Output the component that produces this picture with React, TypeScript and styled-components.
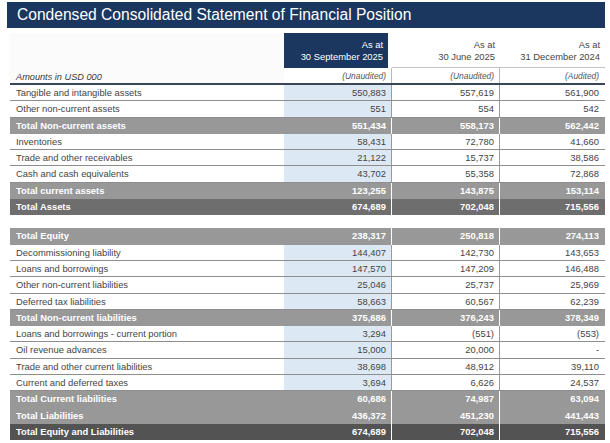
import styled, { createGlobalStyle, css } from "styled-components";

const GlobalStyle = createGlobalStyle`
  html, body {
    margin: 0;
    padding: 0;
    background: #ffffff;
  }
  body {
    font-family: "Liberation Sans", Arial, sans-serif;
  }
`;

const NAVY = "#1b3760";
const COLS = "274px 108px 108px 105px";

type Variant = "line" | "total" | "assets" | "grand";

const rowBg: Record<Variant, string> = {
  line: "#ffffff",
  total: "#989898",
  assets: "#6e6e6e",
  grand: "#535353",
};

const Page = styled.div`
  padding: 2px 5px 0 7px;
  width: 598px;
`;

const TitleBar = styled.div`
  background: ${NAVY};
  color: #ffffff;
  height: 26px;
  display: flex;
  align-items: center;
  padding-left: 10px;
  font-size: 15.6px;
`;

const Table = styled.div`
  margin: 5px 0 0 3px;
  width: 595px;
`;

const HeaderRow = styled.div`
  display: grid;
  grid-template-columns: ${COLS};
  height: 35px;
`;

const HeaderBlank = styled.div`
  background: #fbfbfb;
`;

const HeaderCell = styled.div<{ $current?: boolean }>`
  display: flex;
  flex-direction: column;
  justify-content: flex-end;
  align-items: flex-end;
  padding: 0 5px 4px 0;
  font-size: 9.4px;
  line-height: 12px;
  color: ${(p) => (p.$current ? "#ffffff" : "#454545")};
  background: ${(p) => (p.$current ? NAVY : "#ffffff")};
  margin-right: ${(p) => (p.$current ? "4px" : "0")};
  border-bottom: 1px solid ${(p) => (p.$current ? NAVY : "#c4c4c4")};
`;

const SubHeaderRow = styled.div`
  display: grid;
  grid-template-columns: ${COLS};
  height: 17px;
  box-sizing: border-box;
  border-bottom: 2px solid #3a4557;
`;

const UnitsLabel = styled.div`
  background: #fbfbfb;
  font-size: 9.2px;
  font-style: italic;
  color: #3a3a3a;
  padding: 4px 0 0 6px;
  line-height: 11px;
`;

const AuditCell = styled.div<{ $sep?: boolean }>`
  font-size: 8.4px;
  font-style: italic;
  color: #555555;
  text-align: right;
  padding: 2px 5px 0 0;
  line-height: 12px;
  border-right: 1px solid ${(p) => (p.$sep ? "#b8b8b8" : "transparent")};
`;

const Row = styled.div<{ $variant: Variant }>`
  display: grid;
  grid-template-columns: ${COLS};
  height: 16.3px;
  box-sizing: border-box;
  background: ${(p) => rowBg[p.$variant]};
  ${(p) =>
    p.$variant === "line"
      ? css`
          border-bottom: 1px solid #8e8e8e;
          color: #444444;
          font-weight: normal;
        `
      : css`
          color: #ffffff;
          font-weight: bold;
        `}
  font-size: 9.4px;
  line-height: 15.3px;
`;

const Label = styled.div`
  padding-left: 6px;
  white-space: nowrap;
`;

const Value = styled.div<{ $variant: Variant; $current?: boolean; $sep?: boolean }>`
  text-align: right;
  padding-right: 5px;
  background: ${(p) =>
    p.$variant === "line" && p.$current ? "#dce8f4" : "transparent"};
  border-right: 1px solid
    ${(p) =>
      !p.$sep ? "transparent" : p.$variant === "line" ? "#9a9a9a" : "#ffffff"};
`;

const Gap = styled.div`
  height: 13px;
`;

type Line = [string, string, string, string, Variant];

const assets: Line[] = [
  ["Tangible and intangible assets", "550,883", "557,619", "561,900", "line"],
  ["Other non-current assets", "551", "554", "542", "line"],
  ["Total Non-current assets", "551,434", "558,173", "562,442", "total"],
  ["Inventories", "58,431", "72,780", "41,660", "line"],
  ["Trade and other receivables", "21,122", "15,737", "38,586", "line"],
  ["Cash and cash equivalents", "43,702", "55,358", "72,868", "line"],
  ["Total current assets", "123,255", "143,875", "153,114", "total"],
  ["Total Assets", "674,689", "702,048", "715,556", "assets"],
];

const liabilities: Line[] = [
  ["Total Equity", "238,317", "250,818", "274,113", "total"],
  ["Decommissioning liability", "144,407", "142,730", "143,653", "line"],
  ["Loans and borrowings", "147,570", "147,209", "146,488", "line"],
  ["Other non-current liabilities", "25,046", "25,737", "25,969", "line"],
  ["Deferred tax liabilities", "58,663", "60,567", "62,239", "line"],
  ["Total Non-current liabilities", "375,686", "376,243", "378,349", "total"],
  ["Loans and borrowings - current portion", "3,294", "(551)", "(553)", "line"],
  ["Oil revenue advances", "15,000", "20,000", "-", "line"],
  ["Trade and other current liabilities", "38,698", "48,912", "39,110", "line"],
  ["Current and deferred taxes", "3,694", "6,626", "24,537", "line"],
  ["Total Current liabilities", "60,686", "74,987", "63,094", "total"],
  ["Total Liabilities", "436,372", "451,230", "441,443", "total"],
  ["Total Equity and Liabilities", "674,689", "702,048", "715,556", "grand"],
];

function StatementRow({ line }: { line: Line }) {
  const [label, a, b, c, variant] = line;
  return (
    <Row $variant={variant}>
      <Label>{label}</Label>
      <Value $variant={variant} $current $sep>
        {a}
      </Value>
      <Value $variant={variant} $sep>
        {b}
      </Value>
      <Value $variant={variant}>{c}</Value>
    </Row>
  );
}

export default function App() {
  return (
    <>
      <GlobalStyle />
      <Page>
        <TitleBar>Condensed Consolidated Statement of Financial Position</TitleBar>
        <Table>
          <HeaderRow>
            <HeaderBlank />
            <HeaderCell $current>
              <span>As at</span>
              <span>30 September 2025</span>
            </HeaderCell>
            <HeaderCell>
              <span>As at</span>
              <span>30 June 2025</span>
            </HeaderCell>
            <HeaderCell>
              <span>As at</span>
              <span>31 December 2024</span>
            </HeaderCell>
          </HeaderRow>
          <SubHeaderRow>
            <UnitsLabel>Amounts in USD 000</UnitsLabel>
            <AuditCell $sep>(Unaudited)</AuditCell>
            <AuditCell $sep>(Unaudited)</AuditCell>
            <AuditCell>(Audited)</AuditCell>
          </SubHeaderRow>
          {assets.map((line) => (
            <StatementRow key={line[0]} line={line} />
          ))}
          <Gap />
          {liabilities.map((line) => (
            <StatementRow key={line[0]} line={line} />
          ))}
        </Table>
      </Page>
    </>
  );
}
